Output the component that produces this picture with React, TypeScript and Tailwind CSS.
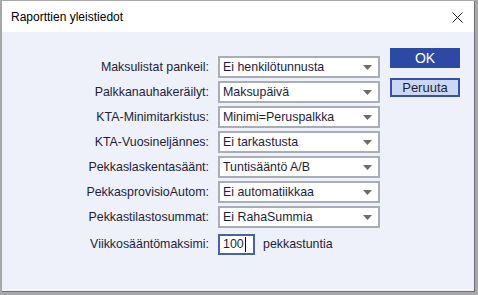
const rows: { label: string; value: string }[] = [
  { label: "Maksulistat pankeil:", value: "Ei henkilötunnusta" },
  { label: "Palkkanauhakeräilyt:", value: "Maksupäivä" },
  { label: "KTA-Minimitarkistus:", value: "Minimi=Peruspalkka" },
  { label: "KTA-Vuosineljännes:", value: "Ei tarkastusta" },
  { label: "Pekkaslaskentasäänt:", value: "Tuntisääntö A/B" },
  { label: "PekkasprovisioAutom:", value: "Ei automatiikkaa" },
  { label: "Pekkastilastosummat:", value: "Ei RahaSummia" },
];

function Combo({ value }: { value: string }) {
  return (
    <div className="flex h-[22px] w-[162px] items-center justify-between border-2 border-[#a9adb5] bg-white pl-[3px] pr-[6px]">
      <span>{value}</span>
      <svg width="9" height="5" viewBox="0 0 9 5">
        <path d="M0 0 H9 L4.5 5 Z" fill="#6b6b6b" />
      </svg>
    </div>
  );
}

export default function App() {
  return (
    <div
      className="h-[295px] w-[478px] border-t border-l-2 border-r-[3px] border-b-[3px] border-[#a8a8a8] bg-white"
      style={{ fontFamily: '"Liberation Sans", Arial, sans-serif' }}
    >
      <div className="flex h-full flex-col border-b border-r border-[#707070]">
        <div className="flex h-[31px] items-center justify-between bg-white pl-[9px] pr-[10px]">
          <span className="text-[12px] text-black">Raporttien yleistiedot</span>
          <svg width="11" height="11" viewBox="0 0 11 11" className="mr-[1px] mt-[2px]">
            <path d="M0.5 0.5 L10.5 10.5 M10.5 0.5 L0.5 10.5" stroke="#222" strokeWidth="1" />
          </svg>
        </div>
        <div className="flex flex-1 bg-[#eef1fa] text-[12.4px] text-[#1e1e3a]">
          <div className="ml-[207px] mt-[24px] grid grid-cols-[auto_auto] content-start gap-x-[9px] gap-y-[3px]">
            {rows.map((r) => (
              <div key={r.label} className="contents">
                <div className="-ml-[200px] flex h-[22px] w-[200px] items-center justify-end">
                  {r.label}
                </div>
                <Combo value={r.value} />
              </div>
            ))}
            <div className="-ml-[200px] mt-[2px] flex h-[22px] w-[200px] items-center justify-end">
              Viikkosääntömaksimi:
            </div>
            <div className="mt-[2px] flex h-[22px] items-center">
              <div className="flex h-[21px] w-[37px] items-center border-2 border-[#4a62a8] bg-white pl-[3px]">
                100<span className="ml-px inline-block h-[15px] w-[1px] bg-black" />
              </div>
              <span className="ml-[8px]">pekkastuntia</span>
            </div>
          </div>
          <div className="ml-[10px] mt-[16px] flex flex-col gap-[10px]">
            <button
              type="button"
              className="flex h-[20px] w-[70px] items-center justify-center bg-[#2c49a6] text-[14px] text-white"
            >
              OK
            </button>
            <button
              type="button"
              className="flex h-[19px] w-[70px] items-center justify-center border-2 border-[#3651a8] bg-[#ccd8f2] text-[13px] text-[#1e1e3a]"
            >
              Peruuta
            </button>
          </div>
        </div>
      </div>
    </div>
  );
}
